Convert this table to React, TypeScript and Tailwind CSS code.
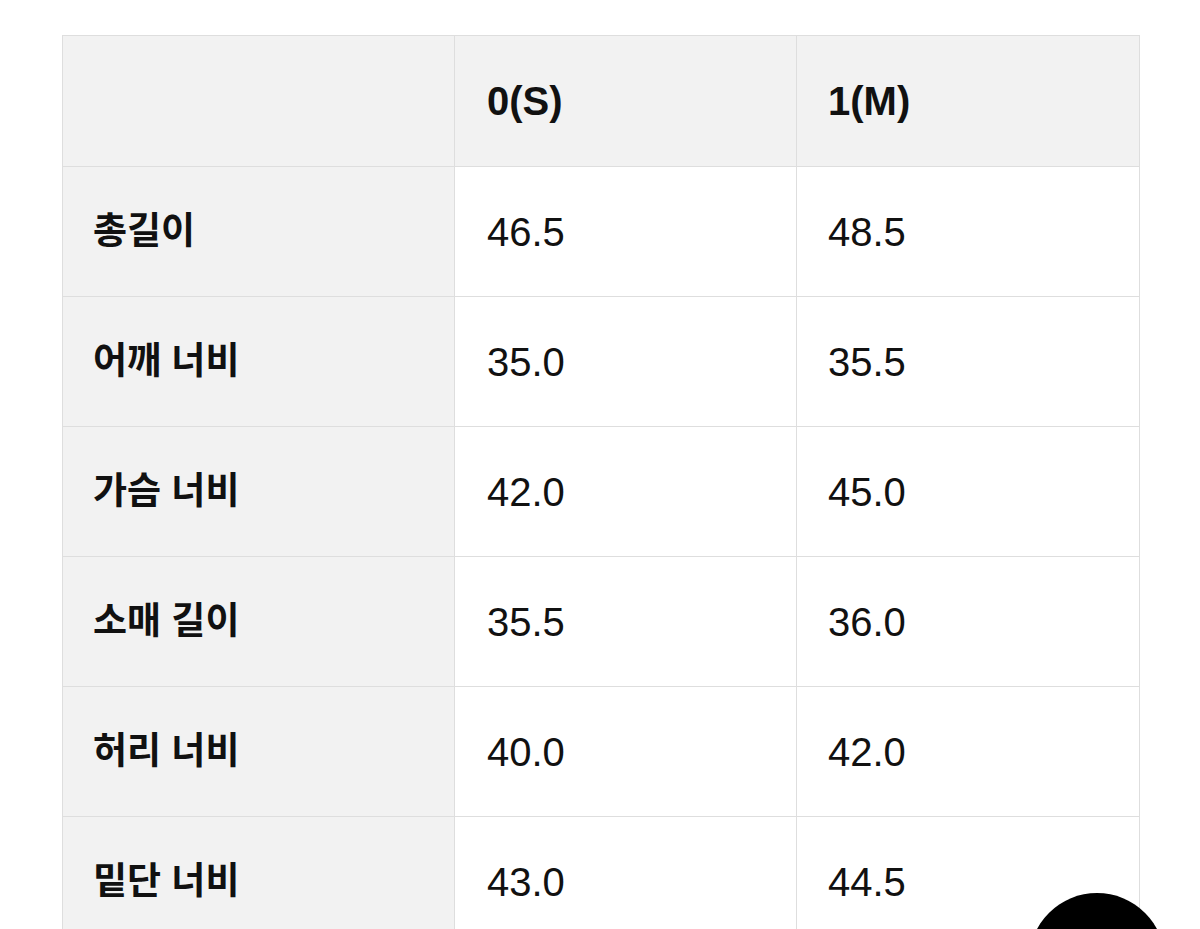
import React from 'react';

const rows = [
  { label: '총길이', s: '46.5', m: '48.5' },
  { label: '어깨 너비', s: '35.0', m: '35.5' },
  { label: '가슴 너비', s: '42.0', m: '45.0' },
  { label: '소매 길이', s: '35.5', m: '36.0' },
  { label: '허리 너비', s: '40.0', m: '42.0' },
  { label: '밑단 너비', s: '43.0', m: '44.5' },
];

export default function App() {
  return (
    <div
      className="min-h-screen bg-white pt-[35px] pl-[62px]"
      style={{ fontFamily: '"Liberation Sans", "Noto Sans CJK KR", sans-serif' }}
    >
      <table className="border-collapse table-fixed w-[1077px] text-[#111]">
        <colgroup>
          <col className="w-[392px]" />
          <col className="w-[342px]" />
          <col className="w-[343px]" />
        </colgroup>
        <thead>
          <tr className="h-[131px] bg-[#f2f2f2]">
            <th className="border border-[#dedede]" />
            <th className="border border-[#dedede] pl-[32px] text-left text-[40px] font-bold">0(S)</th>
            <th className="border border-[#dedede] pl-[31px] text-left text-[40px] font-bold">1(M)</th>
          </tr>
        </thead>
        <tbody>
          {rows.map((row) => (
            <tr key={row.label} className="h-[130px]">
              <td className="border border-[#dedede] bg-[#f2f2f2] pl-[30px] text-[37px] font-bold">{row.label}</td>
              <td className="border border-[#dedede] pl-[32px] text-[40px]">{row.s}</td>
              <td className="border border-[#dedede] pl-[31px] text-[40px]">{row.m}</td>
            </tr>
          ))}
        </tbody>
      </table>
      <div className="fixed left-[1029px] top-[893px] h-[136px] w-[136px] rounded-full bg-black" />
    </div>
  );
}
